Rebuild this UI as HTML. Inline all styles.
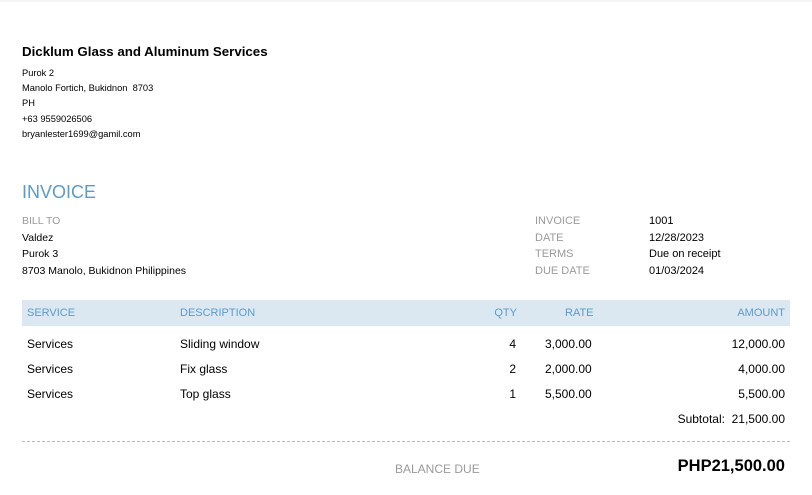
<!DOCTYPE html>
<html><head><meta charset="utf-8"><style>
body{margin:0;width:812px;height:495px;background:#fff;font-family:"Liberation Sans",Arial,sans-serif;position:relative;overflow:hidden;color:#000}
.a{position:absolute;white-space:nowrap}
.s{font-size:9.3px}
.m{font-size:12px}
.g{color:#9a9a9a;font-size:12px}
.b{color:#5b9bc8;font-size:11px}
.r{text-align:right}
</style></head><body>
<div class="a" style="left:0;top:0;width:812px;height:2px;background:#f4f4f4"></div>
<div class="a" style="left:22px;top:44px;font-size:13.3px;font-weight:bold">Dicklum Glass and Aluminum Services</div>
<div class="a s" style="left:22px;top:68px">Purok 2</div>
<div class="a s" style="left:22px;top:83px">Manolo Fortich, Bukidnon&nbsp; 8703</div>
<div class="a s" style="left:22px;top:98px">PH</div>
<div class="a s" style="left:22px;top:114px">+63 9559026506</div>
<div class="a s" style="left:22px;top:129px">bryanlester1699@gamil.com</div>
<div class="a" style="left:22px;top:182px;font-size:18px;color:#5b9bc8">INVOICE</div>
<div class="a g" style="left:22px;top:215px;font-size:10.5px">BILL TO</div>
<div class="a m" style="left:22px;top:232px;font-size:10.5px">Valdez</div>
<div class="a m" style="left:22px;top:248px;font-size:10.5px">Purok 3</div>
<div class="a m" style="left:22px;top:265px;font-size:10.5px">8703 Manolo, Bukidnon Philippines</div>
<div class="a g" style="left:535px;top:215px;font-size:11px">INVOICE</div>
<div class="a g" style="left:535px;top:232px;font-size:11px">DATE</div>
<div class="a g" style="left:535px;top:248px;font-size:11px">TERMS</div>
<div class="a g" style="left:535px;top:265px;font-size:11px">DUE DATE</div>
<div class="a" style="left:649px;top:215px;font-size:11px">1001</div>
<div class="a" style="left:649px;top:232px;font-size:11px">12/28/2023</div>
<div class="a" style="left:649px;top:248px;font-size:11px">Due on receipt</div>
<div class="a" style="left:649px;top:265px;font-size:11px">01/03/2024</div>
<div class="a" style="left:22px;top:300px;width:768px;height:26px;background:#dce8f1"></div>
<div class="a b" style="left:27px;top:307px">SERVICE</div>
<div class="a b" style="left:180px;top:307px">DESCRIPTION</div>
<div class="a b r" style="right:295px;top:307px">QTY</div>
<div class="a b" style="left:565px;top:307px">RATE</div>
<div class="a b r" style="right:27px;top:307px">AMOUNT</div>

<div class="a m" style="left:27px;top:337px">Services</div><div class="a m" style="left:180px;top:337px">Sliding window</div><div class="a m r" style="right:296px;top:337px">4</div><div class="a m" style="left:545px;top:337px">3,000.00</div><div class="a m r" style="right:27px;top:337px">12,000.00</div>
<div class="a m" style="left:27px;top:362px">Services</div><div class="a m" style="left:180px;top:362px">Fix glass</div><div class="a m r" style="right:296px;top:362px">2</div><div class="a m" style="left:545px;top:362px">2,000.00</div><div class="a m r" style="right:27px;top:362px">4,000.00</div>
<div class="a m" style="left:27px;top:387px">Services</div><div class="a m" style="left:180px;top:387px">Top glass</div><div class="a m r" style="right:296px;top:387px">1</div><div class="a m" style="left:545px;top:387px">5,500.00</div><div class="a m r" style="right:27px;top:387px">5,500.00</div>
<div class="a m r" style="right:27px;top:412px">Subtotal:&nbsp; 21,500.00</div>
<div class="a" style="left:22px;top:441px;width:768px;border-top:1px dashed #bbb"></div>
<div class="a g" style="left:395px;top:462px">BALANCE DUE</div>
<div class="a r" style="right:27px;top:457px;font-size:16.5px;font-weight:bold">PHP21,500.00</div>
</body></html>
